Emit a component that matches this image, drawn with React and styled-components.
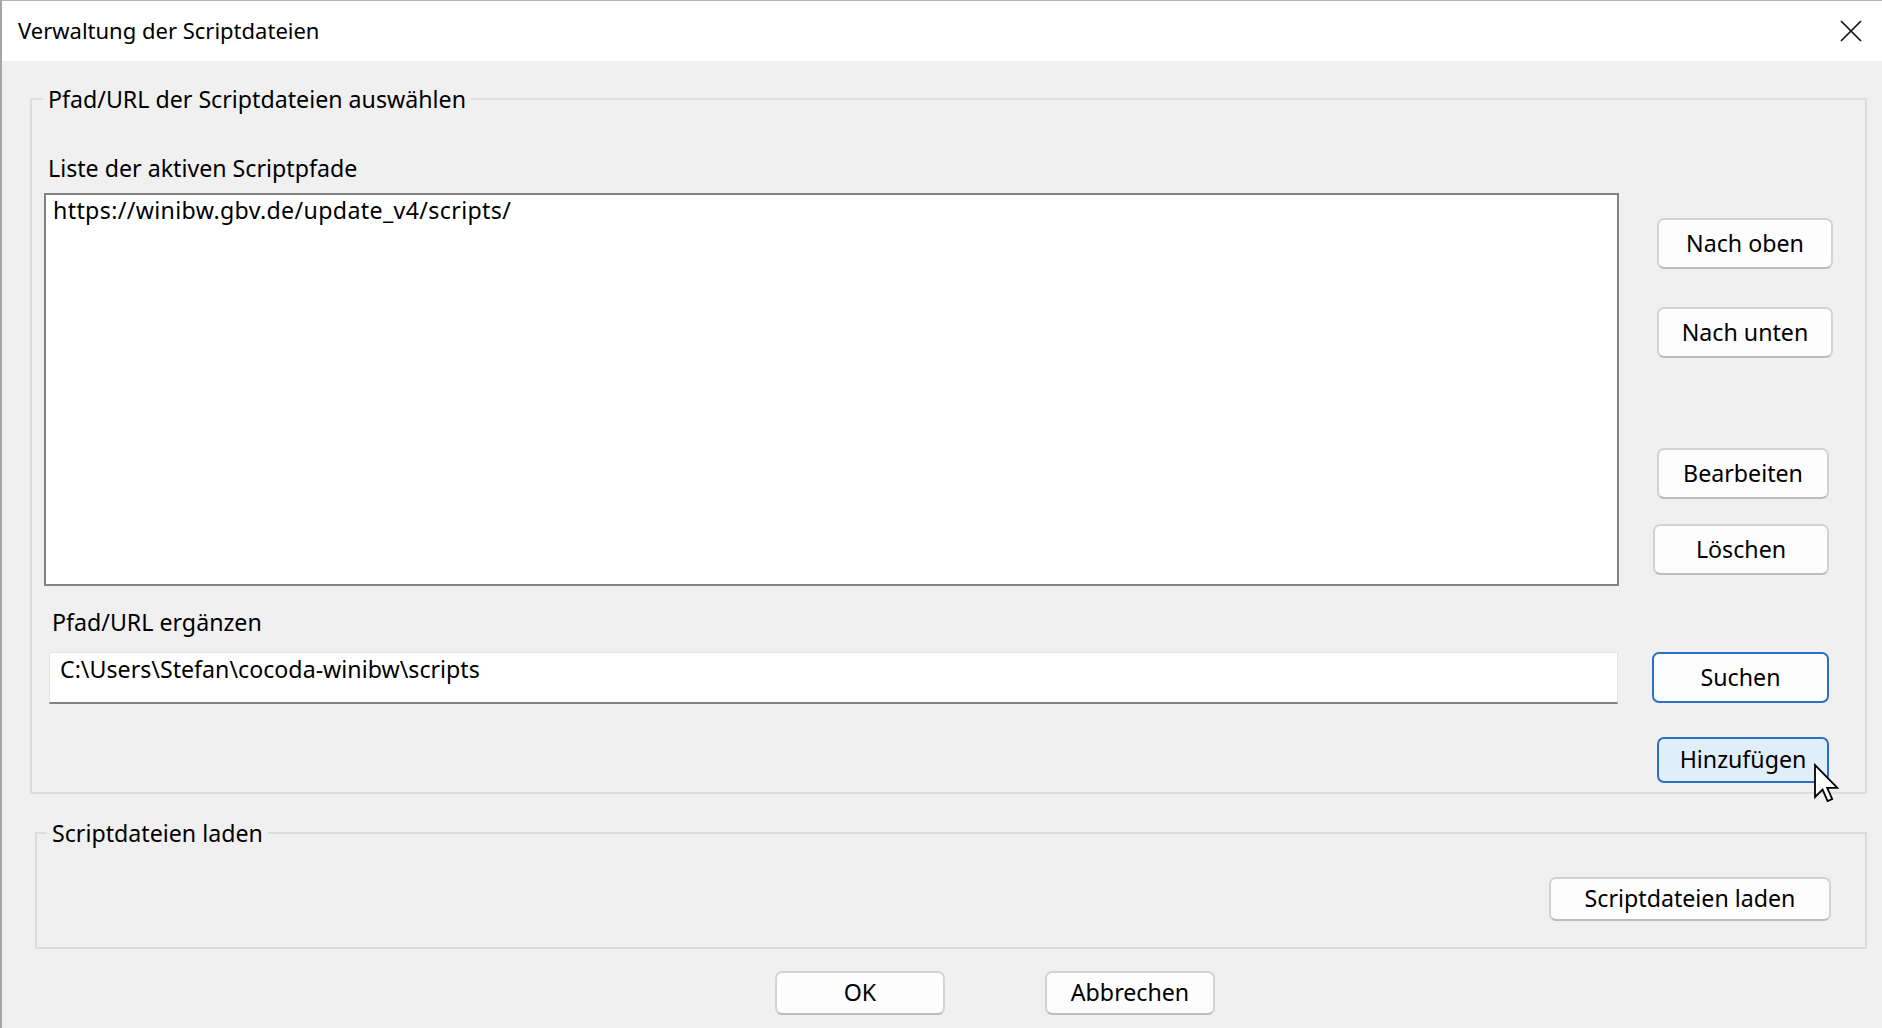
import React from 'react'
import styled, { createGlobalStyle } from 'styled-components'

const GlobalStyle = createGlobalStyle`
  html, body {
    margin: 0;
    padding: 0;
  }
  body {
    background: #f0f0f0;
    font-family: "Noto Sans", "Open Sans", sans-serif;
    color: #000;
  }
`

const Window = styled.div`
  width: 1882px;
  height: 1028px;
  box-sizing: border-box;
  border-left: 2px solid #9ea8aa;
  border-top: 1px solid #b4b4b4;
  background: #f0f0f0;
  display: flex;
  flex-direction: column;
  overflow: hidden;
  font-size: 23.2px;
`

const TitleBar = styled.div`
  height: 60px;
  flex: none;
  background: #fff;
  display: flex;
  align-items: center;
  justify-content: space-between;
  padding: 0 20px 0 16px;
`

const Title = styled.span`
  font-size: 22px;
  line-height: 28px;
  margin-top: -2px;
`

const Body = styled.div`
  padding: 0 15px 0 28px;
  display: flex;
  flex-direction: column;
`

const Group = styled.fieldset`
  margin: ${p => p.$top}px 0 0 ${p => p.$left}px;
  padding: 0;
  min-width: 0;
  border: 2px solid #dcdcdc;
`

const Legend = styled.legend`
  margin-left: ${p => p.$indent}px;
  padding: 0 5px;
  line-height: 30px;
`

const PathGrid = styled.div`
  display: grid;
  grid-template-columns: 1575px 1fr;
  padding-left: 12px;
`

const Label = styled.div`
  grid-column: 1 / -1;
  margin: ${p => p.$top}px 0 0 ${p => p.$indent}px;
  line-height: 30px;
`

const ListBox = styled.div`
  height: 393px;
  box-sizing: border-box;
  margin-top: 10px;
  border: 2px solid #838383;
  background: #fff;
  padding: 0 7px;
`

const ListItem = styled.div`
  line-height: 30px;
  letter-spacing: 0.35px;
  white-space: nowrap;
`

const ButtonColumn = styled.div`
  display: flex;
  flex-direction: column;
  align-items: flex-start;
  margin-top: 10px;
`

const Button = styled.button`
  position: relative;
  box-sizing: border-box;
  width: ${p => p.$w}px;
  height: ${p => p.$h || 51}px;
  margin: ${p => p.$top || 0}px ${p => p.$right || 0}px ${p => p.$bottom || 0}px ${p => p.$x || 0}px;
  padding: 0 0 2px;
  font: inherit;
  color: #000;
  line-height: 30px;
  border-radius: 7px;
  background: ${p => (p.$hover ? '#e0eef9' : '#fdfdfd')};
  border: 2px solid ${p => (p.$hover || p.$focus ? '#2b6fc6' : '#d3d3d3')};
  border-bottom-color: ${p => (p.$hover || p.$focus ? '#2b6fc6' : '#bdbdbd')};
  cursor: default;
`

const TextBox = styled.div`
  width: 1569px;
  height: 52px;
  box-sizing: border-box;
  margin: 15px 0 0 5px;
  background: #fff;
  border: 1px solid #e3e3e3;
  border-bottom: 2px solid #838383;
  padding: 1px 10px 0;
  line-height: 30px;
  white-space: nowrap;
`

const RightCell = styled.div`
  display: flex;
  align-items: flex-start;
`

const LoadRow = styled.div`
  display: flex;
  justify-content: flex-end;
`

const Footer = styled.div`
  display: flex;
  gap: 100px;
  margin-top: 22px;
  padding-left: 745px;
`

const Cursor = styled.svg`
  position: absolute;
  left: 154px;
  top: 24px;
  pointer-events: none;
`

const CloseIcon = () => (
  <svg width="22" height="22" viewBox="0 0 22 22">
    <path d="M1 1 L21 21 M21 1 L1 21" stroke="#111" strokeWidth="1.7" fill="none" />
  </svg>
)

const ArrowCursor = () => (
  <Cursor width="26" height="40" viewBox="0 0 13 20">
    <path
      d="M1 1 L1 17 L4.8 13.3 L7.3 19 L9.6 18 L7.1 12.4 L12.2 12.4 Z"
      fill="#fff"
      stroke="#000"
      strokeWidth="0.9"
      strokeLinejoin="miter"
    />
  </Cursor>
)

export default function App() {
  return (
    <>
      <GlobalStyle />
      <Window>
        <TitleBar>
          <Title>Verwaltung der Scriptdateien</Title>
          <CloseIcon />
        </TitleBar>

        <Body>
          <Group $top={23} $left={0}>
            <Legend $indent={11}>Pfad/URL der Scriptdateien auswählen</Legend>
            <PathGrid>
              <Label $top={39} $indent={4}>Liste der aktiven Scriptpfade</Label>

              <ListBox>
                <ListItem>https://winibw.gbv.de/update_v4/scripts/</ListItem>
              </ListBox>
              <ButtonColumn>
                <Button $w={176} $x={38} $top={25}>Nach oben</Button>
                <Button $w={176} $x={38} $top={38}>Nach unten</Button>
                <Button $w={172} $x={38} $top={90}>Bearbeiten</Button>
                <Button $w={176} $x={34} $top={25}>Löschen</Button>
              </ButtonColumn>

              <Label $top={21} $indent={8}>Pfad/URL ergänzen</Label>

              <TextBox>C:\Users\Stefan\cocoda-winibw\scripts</TextBox>
              <RightCell>
                <Button $w={177} $x={33} $top={15} $focus>Suchen</Button>
              </RightCell>

              <div />
              <RightCell>
                <Button $w={172} $h={46} $x={38} $top={33} $bottom={9} $hover>
                  Hinzufügen
                  <ArrowCursor />
                </Button>
              </RightCell>
            </PathGrid>
          </Group>

          <Group $top={24} $left={5}>
            <Legend $indent={10}>Scriptdateien laden</Legend>
            <LoadRow>
              <Button $w={282} $h={44} $top={29} $right={34} $bottom={26}>
                Scriptdateien laden
              </Button>
            </LoadRow>
          </Group>

          <Footer>
            <Button $w={170} $h={44}>OK</Button>
            <Button $w={170} $h={44}>Abbrechen</Button>
          </Footer>
        </Body>
      </Window>
    </>
  )
}
